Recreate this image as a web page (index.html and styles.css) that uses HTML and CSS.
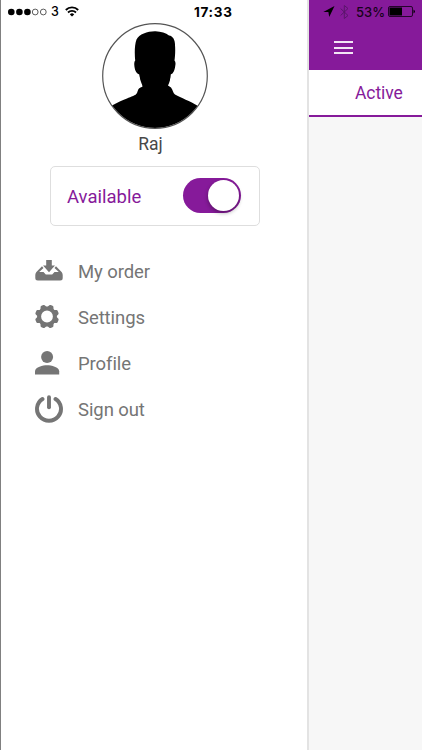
FILE: index.html
```html
<!DOCTYPE html>
<html lang="en">
<head>
<meta charset="utf-8">
<title>Menu</title>
<link rel="stylesheet" href="styles.css">
</head>
<body>
<div class="app">
  <aside class="drawer">
    <div class="status">
      <svg class="signal" width="39" height="8" viewBox="0 0 39 8"><circle cx="3.3" cy="4" r="3.3"/><circle cx="11.4" cy="4" r="3.3"/><circle cx="19.4" cy="4" r="3.3"/><g fill="none" stroke="#333" stroke-width=".8"><circle cx="27.2" cy="4" r="2.9"/><circle cx="35.3" cy="4" r="2.9"/></g></svg>
      <span class="carrier">3</span>
      <svg class="wifi" width="14" height="11" viewBox="0 0 14 11"><g fill="none" stroke="#000" stroke-width="1.8"><path d="M.8 4a8.8 8.8 0 0 1 12.4 0"/><path d="M3 6.5a5.7 5.7 0 0 1 8 0"/></g><path d="M7 10.6 4.8 8.4a3.1 3.1 0 0 1 4.4 0z"/></svg>
      <span class="clock">17:33</span>
    </div>
    <div class="user">
      <svg class="avatar" width="106" height="106" viewBox="0 0 106 106">
        <clipPath id="round"><circle cx="53" cy="53" r="52"/></clipPath>
        <path clip-path="url(#round)" d="M10 82.500C16 79 21 77 25 75.500C29 73.500 34 72.500 35 70C36 67 36.500 65 38.500 64.500L41 63.500C39 60 38 56 37.500 51.500C34 51 32.500 46 32.300 42Q32 38.500 33.200 37.500C32.500 31 32.500 22 34.500 16.500C37 11 46 8 53.500 8.200C59 8.500 64 10 67 12.500C71 13 73 17 73 22C73.500 28 73 34 72.500 37.500Q74 39 73.300 42.500C73 46 71.500 51 68.500 51.500C68.500 56 67.500 60 66 62.500L69 64.500C71 67 71 70 73 71.500C79 75 88 78 96 83V107H9z"/>
        <path d="M37.500 48h31Q69 56 66 60v7H40.500v-7Q37 56 37.500 48z"/>
        <circle cx="53" cy="53" r="52.3" fill="none" stroke="#555" stroke-width="1.2"/>
      </svg>
      <div class="name"><span>Raj</span></div>
    </div>
    <div class="availability"><span class="label">Available</span><span class="toggle"><i></i></span></div>
    <nav class="menu">
      <a><svg width="28" height="28" viewBox="0 0 28 28"><path d="M11.200 3h5.600v5.500H20L14 15.300 8 8.500h3.200z"/><path d="M7 9.300 1.400 15Q.3 16.500.3 18v3q0 2.500 2.500 2.500h22.400q2.500 0 2.500-2.500v-3q0-1.500-1.100-3L21 9.300l-1.500 1.600 4.300 4.100h-4.300L17.200 17.500h-6.400L8.500 15H4.200l4.300-4.100z"/></svg><span class="order">My order</span></a>
      <a><svg width="28" height="28" viewBox="0 0 28 28"><g transform="translate(12 13.5)"><circle r="7.9" fill="none" stroke="#757575" stroke-width="4"/><g id="teeth"><path id="tooth" d="M-3.600-8.500-2.200-11.400Q-1.900-12-1-12h2q.9 0 1.200.6l1.400 2.900z" transform="rotate(22.5)"/><use href="#tooth" transform="rotate(45)"/><use href="#tooth" transform="rotate(90)"/><use href="#tooth" transform="rotate(135)"/></g><use href="#teeth" transform="rotate(180)"/></g></svg><span class="settings">Settings</span></a>
      <a><svg width="28" height="28" viewBox="0 0 28 28"><circle cx="12.1" cy="8" r="6"/><path d="M0 25.5v-3.200C0 18 8 16.200 12.100 16.200S24.200 18 24.200 22.300v3.200z"/></svg><span class="profile">Profile</span></a>
      <a><svg width="28" height="28" viewBox="0 0 28 28"><g fill="none" stroke="#757575" stroke-width="3.9" stroke-linecap="round"><path d="M7.500 4a12 11.800 0 1 0 13 0"/><path d="M14 2.200v10"/></g></svg><span class="signout">Sign out</span></a>
    </nav>
  </aside>
  <main class="page">
    <header class="header">
      <div class="system">
        <svg class="location" width="12" height="11" viewBox="0 0 12 11"><path d="M11.500 0 6.200 11 5.400 6H.3z"/></svg>
        <svg class="bluetooth" width="9" height="14" viewBox="0 0 9 14"><path d="m.6 3.500 7.400 7L4.300 13.500V.5L8 3.500l-7.400 7" fill="none" stroke="#5a166b"/></svg>
        <span class="percent">53%</span>
        <svg class="battery" width="28" height="11" viewBox="0 0 28 11"><rect x=".5" y=".5" width="24" height="10" rx="1.5" fill="none" stroke="#25042c"/><path d="M1.500 1.500h12.500v8H1.500zM25.500 3.500q3 2 0 4z"/></svg>
      </div>
      <div class="burger"><i></i><i></i><i></i></div>
    </header>
    <div class="tab"><span>Active</span></div>
  </main>
</div>
</body>
</html>
```
FILE: styles.css
```css
* { box-sizing: border-box; }
body { margin: 0; font-family: Roboto, "Liberation Sans", sans-serif; overflow: hidden; }
svg { display: block; flex: none; }
span { display: inline-block; white-space: nowrap; }
.app { display: flex; width: 422px; height: 750px; background: #f7f7f7; }
.drawer { width: 309px; height: 750px; flex: none; background: #fff; border-left: 1px solid #808080; border-right: 2px solid #e3e3e3; }
.status { height: 23px; display: flex; align-items: center; padding-left: 7px; font-family: Inter, sans-serif; color: #000; }
.carrier { margin-left: 4px; width: 9px; font-size: 12.5px; font-weight: 500; }
.wifi { margin-left: 5px; }
.clock { margin-left: 115px; font-size: 13.5px; font-weight: 700; letter-spacing: .7px; }
.user { width: 106px; margin-left: 101px; height: 143px; }
.name { margin-top: 4px; padding-right: 9px; text-align: center; font-size: 17.5px; line-height: 22px; color: #484848; }
.availability { width: 210px; height: 60px; margin-left: 49px; padding: 0 18px 0 16px; display: flex; align-items: center; justify-content: space-between; border: 1px solid #dedede; border-radius: 5px; }
.label { padding-top: 2px; color: #861a9a; font-size: 18.5px; }
.toggle { width: 58px; height: 35px; margin-top: -1px; padding: 2px; display: flex; justify-content: flex-end; border-radius: 18px; background: #861a9a; }
.toggle i { width: 31px; height: 31px; border-radius: 50%; background: #fff; box-shadow: 0 2px 4px #0005; }
.menu { margin: 22px 0 0 34px; }
.menu a { height: 46px; display: flex; align-items: center; gap: 15px; color: #757575; font-size: 18.5px; letter-spacing: -.08px; }
.menu svg { fill: #757575; }
.menu span { padding-top: 2px; }
.page { width: 113px; background: #f7f7f7; }
.header { height: 70px; background: #861a9a; }
.system { height: 23px; padding-left: 14px; display: flex; align-items: center; font-family: Inter, sans-serif; }
.bluetooth { margin-left: 5px; }
.percent { margin-left: 7px; width: 29px; font-size: 13px; font-weight: 500; color: #17021b; }
.battery { margin-left: 3px; }
.burger { width: 19px; margin: 18px 0 0 25px; display: flex; flex-direction: column; gap: 3.5px; }
.burger i { height: 2px; background: #f3e6f5; }
.tab { height: 47px; padding: 1px 0 0 46px; display: flex; align-items: center; background: #fff; border-bottom: 2px solid #861a9a; color: #861a9a; font-size: 17.5px; letter-spacing: -.1px; }
```
